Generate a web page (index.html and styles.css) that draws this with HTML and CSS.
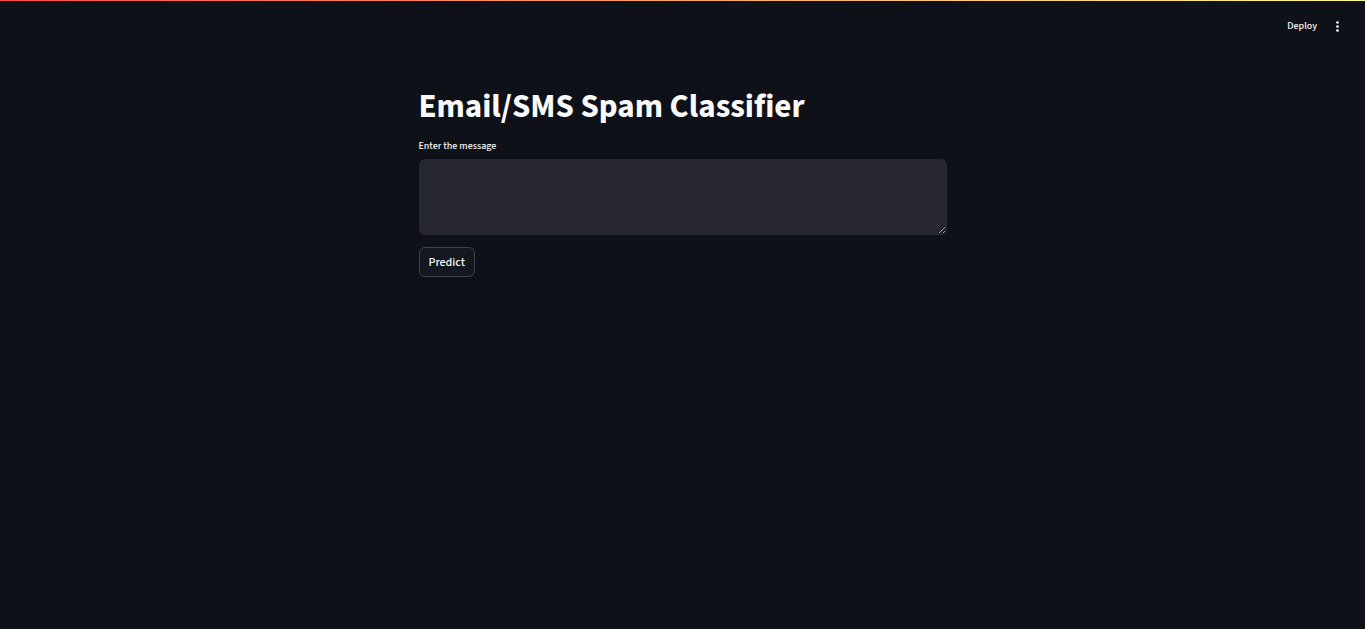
FILE: index.html
```html
<!DOCTYPE html>
<html lang="en">
<head>
<meta charset="utf-8">
<meta name="viewport" content="width=device-width, initial-scale=1">
<title>Email/SMS Spam Classifier</title>
<link rel="stylesheet" href="styles.css">
</head>
<body>
<div class="decoration"></div>
<header class="toolbar">
  <button class="deploy" type="button">Deploy</button>
  <button class="menu" type="button" aria-label="Main menu">
    <svg viewBox="0 0 16 16" width="16" height="16" fill="currentColor" aria-hidden="true"><circle cx="8.5" cy="4.5" r="1.35"/><circle cx="8.5" cy="8.5" r="1.35"/><circle cx="8.5" cy="12.5" r="1.35"/></svg>
  </button>
</header>
<main class="content">
  <h1 class="title">Email/SMS Spam Classifier</h1>
  <label class="label" for="message">Enter the message</label>
  <textarea class="message" id="message"></textarea>
  <button class="predict" type="button">Predict</button>
</main>
</body>
</html>
```
FILE: styles.css
```css
* { box-sizing: border-box; }
body {
  margin: 0;
  min-height: 100vh;
  background: #0e1117;
  color: #fafafa;
  font-family: "Source Sans Pro", "Source Sans 3", "Noto Sans CJK SC", "Open Sans", sans-serif;
}
button, textarea { font: inherit; color: inherit; }
.decoration {
  height: 1px;
  background: linear-gradient(90deg, #ff4b4b, #fffd80);
}
.toolbar {
  display: flex;
  justify-content: flex-end;
  align-items: center;
  gap: 12px;
  height: 50px;
  padding-right: 20px;
}
.deploy, .menu {
  display: flex;
  padding: 0;
  border: 0;
  background: none;
}
.deploy { font-size: 10px; font-weight: 500; line-height: 16px; }
.content {
  display: flex;
  flex-direction: column;
  align-items: flex-start;
  max-width: 528px;
  margin: 0 auto;
  padding-top: 34px;
}
.title {
  margin: 0;
  font-size: 33px;
  font-weight: 700;
  line-height: 44px;
}
.label { margin-top: 9px; font-size: 10px; font-weight: 500; line-height: 16px; }
.message {
  width: 100%;
  height: 76px;
  margin-top: 5px;
  padding: 8px;
  border: 1px solid #262730;
  border-radius: 6px;
  background: #262730;
  font-size: 12px;
  resize: vertical;
}
.predict {
  margin-top: 12px;
  padding: 5px 9px 3px;
  border: 1px solid #41444c;
  border-radius: 6px;
  background: #131720;
  font-size: 12px;
  font-weight: 500;
  line-height: 20px;
}
```
